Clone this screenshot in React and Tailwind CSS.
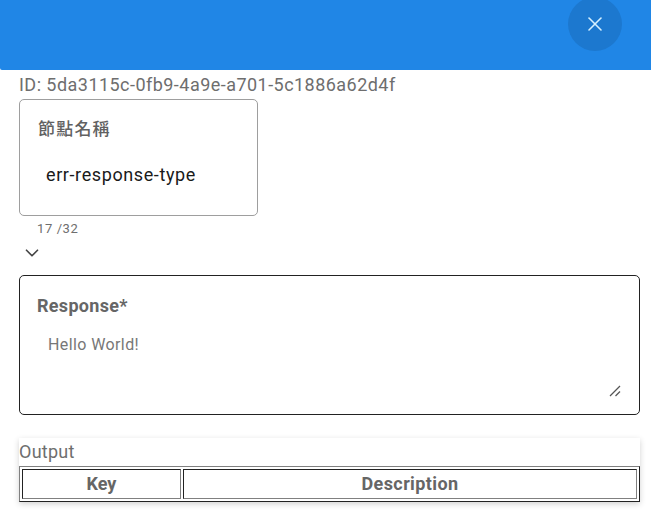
import { X, ChevronDown } from 'lucide-react';

export default function App() {
  return (
    <div className="w-[651px] h-[521px] overflow-hidden bg-white font-['Roboto','Noto_Sans_CJK_TC',sans-serif]">
      {/* Header */}
      <div className="h-[70px] bg-[#2086e6] flex justify-end items-start pr-[29px] rounded-bl-[2px]">
        <button className="w-[54px] h-[54px] -mt-[3px] rounded-full bg-[#1c78cf] flex items-center justify-center">
          <X size={24} strokeWidth={1.6} className="text-[#d5f0ff]" />
        </button>
      </div>

      <div className="pl-[19px] pr-[11px]">
        <p className="text-[18px] leading-[20px] mt-[5px] text-[#6e6e6e] tracking-[0.46px]">ID: 5da3115c-0fb9-4a9e-a701-5c1886a62d4f</p>

        {/* Node name */}
        <div className="w-[239px] h-[117px] mt-[4px] border border-[#9e9e9e] rounded-[5px] pl-[18px] pt-[17px]">
          <p className="text-[17px] leading-[24px] text-[#616161] font-medium tracking-[1.2px]">節點名稱</p>
          <p className="text-[18px] leading-[24px] mt-[22px] ml-[8px] text-[#1a1a1a] tracking-[0.6px]">err-response-type</p>
        </div>
        <p className="text-[13px] leading-[16px] mt-[5px] ml-[18px] text-[#6e6e6e] tracking-[0.6px]">17 /32</p>
        <ChevronDown size={22} strokeWidth={1.8} className="mt-[5px] ml-[2px] text-[#444]" />

        {/* Response */}
        <div className="relative w-[621px] h-[140px] mt-[11px] border border-[#222] rounded-[5px] pl-[17px] pt-[19px]">
          <p className="text-[18px] leading-[22px] font-bold text-[#666] tracking-[0.3px]">Response*</p>
          <p className="text-[16px] leading-[20px] mt-[18px] ml-[11px] text-[#777] tracking-[0.4px]">Hello World!</p>
          <svg className="absolute right-[18px] bottom-[17px]" width="12" height="12" viewBox="0 0 12 12" fill="none" stroke="#555" strokeWidth="1.2">
            <path d="M1 11 L11 1" />
            <path d="M6.5 11 L11 6.5" />
          </svg>
        </div>

        {/* Output */}
        <div className="w-[621px] mt-[23px] pt-[3px] shadow-[0_2px_6px_rgba(0,0,0,0.18)]">
          <p className="text-[18px] leading-[22px] mb-[3px] text-[#6e6e6e] tracking-[0.25px]">Output</p>
          <table className="w-full border-separate border-spacing-[2px] border border-t-[#808080] border-l-[#808080] border-r-[#222] border-b-[#222] bg-white">
            <thead>
              <tr>
                <th className="w-[159px] h-[30px] p-0 pb-[1px] border border-t-[#222] border-l-[#222] border-r-[#808080] border-b-[#808080] text-[18px] font-bold text-[#666]">Key</th>
                <th className="h-[30px] p-0 pb-[1px] border border-t-[#222] border-l-[#222] border-r-[#808080] border-b-[#808080] text-[18px] font-bold text-[#666] tracking-[0.4px]">Description</th>
              </tr>
            </thead>
          </table>
        </div>
      </div>
    </div>
  );
}
